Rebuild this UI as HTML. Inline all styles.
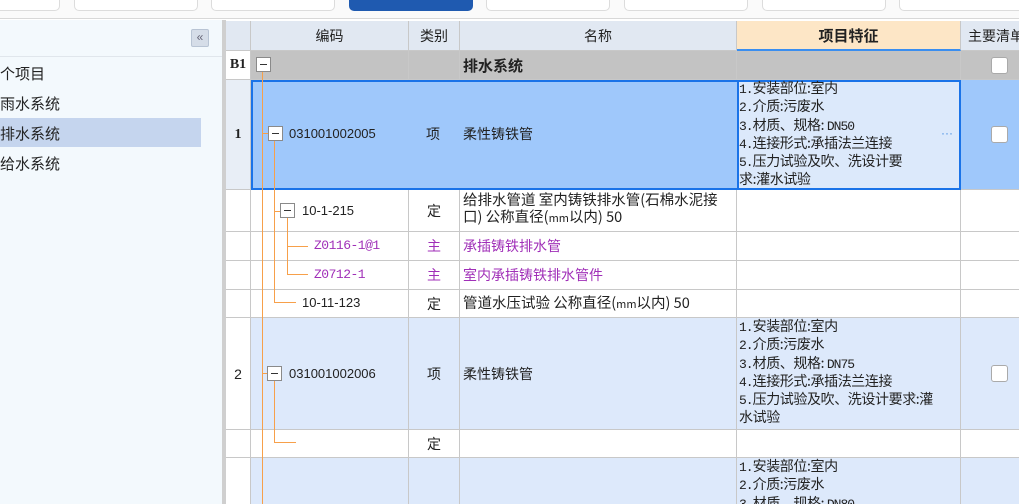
<!DOCTYPE html>
<html><head><meta charset="utf-8"><style>
*{margin:0;padding:0;box-sizing:border-box}
html,body{width:1019px;height:504px;overflow:hidden}
body{background:#fff;font-family:"Liberation Sans","Noto Sans CJK SC",sans-serif;font-size:14px;color:#222;position:relative}
.a{position:absolute}
.btn{position:absolute;top:-10px;height:21px;border:1px solid #dcdcdc;border-radius:5px;background:#fff}
.c{position:absolute;border-right:1px solid #c8c8c8;border-bottom:1px solid #c8c8c8;display:flex;align-items:center}
.ctr{justify-content:center}
.ol{position:absolute;background:#f7a04a}
.tg{position:absolute;width:15px;height:15px;border:1px solid #8a8a8a;background:#fff}
.tg:after{content:"";position:absolute;left:3px;right:3px;top:6px;height:1px;background:#333}
.cb{position:absolute;width:17px;height:17px;border:1px solid #aaa;border-radius:3px;background:#fff}
.ft{font-family:"Noto Sans CJK SC",sans-serif;font-size:14px;line-height:17.3px;letter-spacing:-0.4px;white-space:nowrap}
.ft b{font-weight:normal;font-family:"Liberation Mono",monospace;font-size:13px;letter-spacing:-1px}
.cj{font-family:"Noto Sans CJK SC",sans-serif}
.pur{color:#a02fb8}
</style></head><body>
<div class="a" style="left:0;top:0;width:1019px;height:19px;background:#fafafa;border-bottom:1px solid #d8d8d8"></div>
<div class="btn" style="left:-5px;width:65px"></div>
<div class="btn" style="left:74px;width:124px"></div>
<div class="btn" style="left:211px;width:124px"></div>
<div class="btn" style="left:349px;width:124px;background:#1f5ab0;border-color:#1f5ab0"></div>
<div class="btn" style="left:486px;width:124px"></div>
<div class="btn" style="left:624px;width:124px"></div>
<div class="btn" style="left:762px;width:124px"></div>
<div class="btn" style="left:899px;width:125px"></div>
<div class="a" style="left:0;top:20px;width:222px;height:484px;background:#f3f9fd"></div>
<div class="a" style="left:191px;top:29px;width:18px;height:18px;background:#d5dde8;border:1px solid #b8c4d4;border-radius:2px;color:#667;font-size:12px;line-height:15px;text-align:center">«</div>
<div class="a" style="left:0;top:56px;width:222px;height:1px;background:#e0e6ec"></div>
<div class="a" style="left:0;top:118px;width:201px;height:29px;background:#c5d5ee"></div>
<div class="a" style="left:0;top:63px;font-size:15px">个项目</div>
<div class="a" style="left:0;top:93px;font-size:15px">雨水系统</div>
<div class="a" style="left:0;top:123px;font-size:15px">排水系统</div>
<div class="a" style="left:0;top:153px;font-size:15px">给水系统</div>
<div class="a" style="left:222px;top:20px;width:4px;height:484px;background:#cfcfcf"></div>
<div class="c" style="left:226px;top:21px;width:25px;height:30px;background:#e1e8f2"></div>
<div class="c ctr" style="left:251px;top:21px;width:158px;height:30px;background:#e1e8f2">编码</div>
<div class="c ctr" style="left:409px;top:21px;width:51px;height:30px;background:#e1e8f2">类别</div>
<div class="c ctr" style="left:460px;top:21px;width:277px;height:30px;background:#e1e8f2">名称</div>
<div class="c ctr" style="left:737px;top:21px;width:224px;height:30px;background:#fde6c6;border-bottom:2px solid #3a8ef0;font-weight:bold;font-size:15px">项目特征</div>
<div class="c" style="left:961px;top:21px;width:70px;height:30px;background:#e1e8f2;padding-left:7px;white-space:nowrap">主要清单</div>
<div class="c ctr" style="left:226px;top:51px;width:25px;height:29px;background:#fff;font-weight:bold;font-family:'Liberation Serif',serif">B1</div>
<div class="c" style="left:251px;top:51px;width:158px;height:29px;background:#c3c3c3"></div>
<div class="c" style="left:409px;top:51px;width:51px;height:29px;background:#c3c3c3"></div>
<div class="c" style="left:460px;top:51px;width:277px;height:29px;background:#c3c3c3;padding-left:3px;font-weight:bold;font-size:15px">排水系统</div>
<div class="c" style="left:737px;top:51px;width:224px;height:29px;background:#c3c3c3"></div>
<div class="c" style="left:961px;top:51px;width:60px;height:29px;background:#c3c3c3"></div>
<div class="cb" style="left:991px;top:57px"></div>
<div class="tg" style="left:256px;top:57px"></div>
<div class="c ctr" style="left:226px;top:80px;width:25px;height:110px;background:#e8eef6;font-weight:bold;font-family:'Liberation Serif',serif">1</div>
<div class="c" style="left:251px;top:80px;width:710px;height:110px;background:#9fc8fb"></div>
<div class="c" style="left:961px;top:80px;width:60px;height:110px;background:#9fc8fb"></div>
<div class="a" style="left:251px;top:80px;width:710px;height:110px;border:2px solid #1a73e8"></div>
<div class="a" style="left:737px;top:80px;width:224px;height:110px;border:2px solid #1a73e8;background:#dce9fb"></div>
<div class="a ft" style="left:739px;top:80px"><b>1.</b>安装部位:室内<br><b>2.</b>介质:污废水<br><b>3.</b>材质、规格: <b>DN50</b><br><b>4.</b>连接形式:承插法兰连接<br><b>5.</b>压力试验及吹、洗设计要<br>求:灌水试验</div>
<div class="a" style="left:941px;top:126px;color:#4a90e2;font-size:12px">···</div>
<div class="a" style="left:289px;top:126px;font-size:13px">031001002005</div>
<div class="a" style="left:426px;top:124px">项</div>
<div class="a" style="left:463px;top:124px">柔性铸铁管</div>
<div class="cb" style="left:991px;top:126px"></div>
<div class="c" style="left:226px;top:190px;width:25px;height:42px"></div><div class="c" style="left:251px;top:190px;width:158px;height:42px"></div><div class="c ctr" style="left:409px;top:190px;width:51px;height:42px">定</div><div class="c" style="left:737px;top:190px;width:224px;height:42px"></div><div class="c" style="left:961px;top:190px;width:60px;height:42px"></div>
<div class="c" style="left:460px;top:190px;width:277px;height:42px"></div>
<div class="a cj" style="left:463px;top:191px;line-height:17px;font-size:14.5px;white-space:nowrap">给排水管道 室内铸铁排水管(石棉水泥接<br>口) 公称直径(<span style="font-size:11px">mm</span>以内) 50</div>
<div class="a" style="left:302px;top:203px;font-size:13px">10-1-215</div>
<div class="c" style="left:226px;top:232px;width:25px;height:29px"></div><div class="c" style="left:251px;top:232px;width:158px;height:29px"></div><div class="c ctr pur" style="left:409px;top:232px;width:51px;height:29px">主</div><div class="c pur" style="left:460px;top:232px;width:277px;height:29px;padding-left:3px">承插铸铁排水管</div><div class="c" style="left:737px;top:232px;width:224px;height:29px"></div><div class="c" style="left:961px;top:232px;width:60px;height:29px"></div>
<div class="a pur" style="left:314px;top:238px;font-size:13px;font-family:'Liberation Mono',monospace;letter-spacing:-0.5px">Z0116-1@1</div>
<div class="c" style="left:226px;top:261px;width:25px;height:29px"></div><div class="c" style="left:251px;top:261px;width:158px;height:29px"></div><div class="c ctr pur" style="left:409px;top:261px;width:51px;height:29px">主</div><div class="c pur" style="left:460px;top:261px;width:277px;height:29px;padding-left:3px">室内承插铸铁排水管件</div><div class="c" style="left:737px;top:261px;width:224px;height:29px"></div><div class="c" style="left:961px;top:261px;width:60px;height:29px"></div>
<div class="a pur" style="left:314px;top:267px;font-size:13px;font-family:'Liberation Mono',monospace;letter-spacing:-0.5px">Z0712-1</div>
<div class="c" style="left:226px;top:290px;width:25px;height:28px"></div><div class="c" style="left:251px;top:290px;width:158px;height:28px"></div><div class="c ctr" style="left:409px;top:290px;width:51px;height:28px">定</div><div class="c" style="left:460px;top:290px;width:277px;height:28px"></div><div class="c" style="left:737px;top:290px;width:224px;height:28px"></div><div class="c" style="left:961px;top:290px;width:60px;height:28px"></div>
<div class="a cj" style="left:463px;top:292px;font-size:14.5px;white-space:nowrap">管道水压试验 公称直径(<span style="font-size:11px">mm</span>以内) 50</div>
<div class="a" style="left:302px;top:295px;font-size:13px">10-11-123</div>
<div class="c ctr" style="left:226px;top:318px;width:25px;height:112px">2</div>
<div class="c" style="left:251px;top:318px;width:158px;height:112px;background:#dde9fb"></div><div class="c ctr" style="left:409px;top:318px;width:51px;height:112px;background:#dde9fb">项</div><div class="c" style="left:460px;top:318px;width:277px;height:112px;background:#dde9fb;padding-left:3px">柔性铸铁管</div><div class="c" style="left:737px;top:318px;width:224px;height:112px;background:#dde9fb"></div><div class="c" style="left:961px;top:318px;width:60px;height:112px;background:#dde9fb"></div>
<div class="a ft" style="left:739px;top:318px"><b>1.</b>安装部位:室内<br><b>2.</b>介质:污废水<br><b>3.</b>材质、规格: <b>DN75</b><br><b>4.</b>连接形式:承插法兰连接<br><b>5.</b>压力试验及吹、洗设计要求:灌<br>水试验</div>
<div class="a" style="left:289px;top:366px;font-size:13px">031001002006</div>
<div class="cb" style="left:991px;top:365px"></div>
<div class="c" style="left:226px;top:430px;width:25px;height:28px"></div><div class="c" style="left:251px;top:430px;width:158px;height:28px"></div><div class="c ctr" style="left:409px;top:430px;width:51px;height:28px">定</div><div class="c" style="left:460px;top:430px;width:277px;height:28px"></div><div class="c" style="left:737px;top:430px;width:224px;height:28px"></div><div class="c" style="left:961px;top:430px;width:60px;height:28px"></div>
<div class="c" style="left:226px;top:458px;width:25px;height:46px;border-bottom:none"></div>
<div class="c" style="left:251px;top:458px;width:158px;height:46px;background:#dde9fb;border-bottom:none"></div><div class="c" style="left:409px;top:458px;width:51px;height:46px;background:#dde9fb;border-bottom:none"></div><div class="c" style="left:460px;top:458px;width:277px;height:46px;background:#dde9fb;border-bottom:none"></div><div class="c" style="left:737px;top:458px;width:224px;height:46px;background:#dde9fb;border-bottom:none"></div><div class="c" style="left:961px;top:458px;width:60px;height:46px;background:#dde9fb;border-bottom:none"></div>
<div class="a" style="left:737px;top:458px;width:223px;height:46px;overflow:hidden"><div class="a ft" style="left:2px;top:0"><b>1.</b>安装部位:室内<br><b>2.</b>介质:污废水<br><b>3.</b>材质、规格: <b>DN80</b></div></div>
<div class="ol" style="left:262px;top:72px;width:1px;height:432px"></div>
<div class="ol" style="left:262px;top:133px;width:6px;height:1px"></div>
<div class="tg" style="left:268px;top:126px"></div>
<div class="ol" style="left:274px;top:141px;width:1px;height:162px"></div>
<div class="ol" style="left:274px;top:211px;width:6px;height:1px"></div>
<div class="tg" style="left:280px;top:203px"></div>
<div class="ol" style="left:287px;top:218px;width:1px;height:57px"></div>
<div class="ol" style="left:287px;top:246px;width:21px;height:1px"></div>
<div class="ol" style="left:287px;top:274px;width:21px;height:1px"></div>
<div class="ol" style="left:274px;top:302px;width:22px;height:1px"></div>
<div class="ol" style="left:262px;top:373px;width:5px;height:1px"></div>
<div class="tg" style="left:267px;top:366px"></div>
<div class="ol" style="left:274px;top:381px;width:1px;height:62px"></div>
<div class="ol" style="left:274px;top:442px;width:22px;height:1px"></div>
</body></html>
